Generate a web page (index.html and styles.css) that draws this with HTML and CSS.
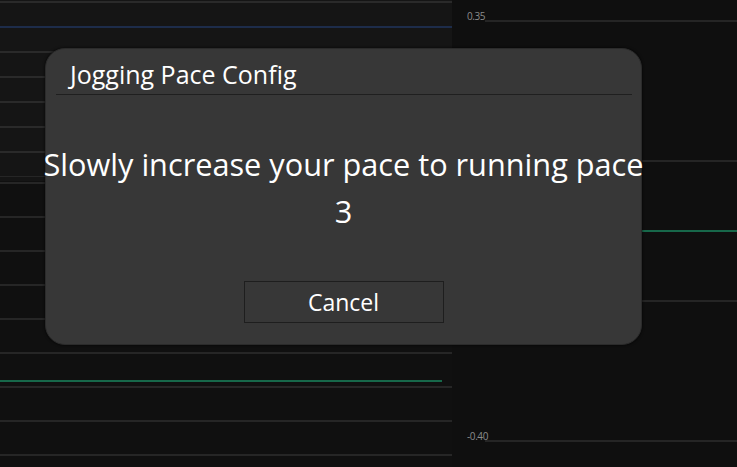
FILE: index.html
```html
<!DOCTYPE html>
<html>
<head>
<meta charset="utf-8">
<link rel="stylesheet" href="styles.css">
</head>
<body>
<div class="screen">
  <div class="left">
    <div class="upper">
      <div class="row"></div>
      <div class="row blue"></div>
      <div class="row"></div>
      <div class="row"></div>
      <div class="row"></div>
      <div class="row"></div>
      <div class="row"></div>
      <div class="row last"></div>
    </div>
    <div class="lower">
      <div class="lrow"></div>
      <div class="lrow"></div>
      <div class="lrow"></div>
      <div class="lrow"></div>
      <div class="lrow"></div>
      <div class="lrow"></div>
      <div class="lrow"></div>
      <div class="lrow"></div>
      <div class="lrow"></div>
      <div class="series" style="top: 199px"></div>
    </div>
  </div>
  <div class="right">
    <div class="axis">
      <div class="tick"><span class="lbl">0.35</span><span class="tline"></span></div>
      <div class="tick gap"><span class="lbl"></span><span class="tline"></span></div>
      <div class="tick gap half"><span class="lbl"></span><span class="tline green"></span></div>
      <div class="tick gap half"><span class="lbl"></span><span class="tline"></span></div>
      <div class="tick gap"><span class="lbl">-0.40</span><span class="tline"></span></div>
    </div>
  </div>

  <div class="dialog">
    <div class="title">Jogging Pace Config</div>
    <div class="sep"></div>
    <div class="message">Slowly increase your pace to running pace<br>3</div>
    <div class="actions"><button class="btn">Cancel</button></div>
  </div>
</div>
</body>
</html>
```
FILE: styles.css
```css
html, body {
  margin: 0;
  padding: 0;
  background: #0f0f0f;
  font-family: "Open Sans", "Noto Sans", sans-serif;
}
.screen {
  position: relative;
  width: 737px;
  height: 467px;
  display: flex;
  overflow: hidden;
}
.left {
  width: 452px;
  display: flex;
  flex-direction: column;
}
.upper {
  background: #151515;
  padding-top: 1px;
  height: 181px;
  box-sizing: border-box;
}
.row {
  height: 25px;
  border-top: 2px solid #2a2a2a;
  box-sizing: border-box;
}
.row.blue {
  border-top-color: #1d2c4a;
}
.row.last {
  border-top: 1px solid #262626;
  height: 5px;
}
.lower {
  position: relative;
  background: #101010;
  padding-top: 1px;
  flex: 1;
}
.lrow {
  height: 34px;
  border-top: 2px solid #262626;
  box-sizing: border-box;
}
.series {
  position: absolute;
  left: 0;
  width: 442px;
  height: 2px;
  background: #17684a;
}
.right {
  flex: 1;
  background: #0f0f0f;
  padding-top: 11px;
}
.axis {
  display: flex;
  flex-direction: column;
}
.tick {
  display: flex;
  align-items: flex-end;
  height: 10px;
}
.tick.gap { margin-top: 130px; }
.tick.gap.half { margin-top: 60px; }
.lbl {
  width: 33px;
  padding-left: 15px;
  box-sizing: border-box;
  font-size: 10px;
  line-height: 10px;
  color: #8c8c8c;
  white-space: nowrap;
  letter-spacing: -0.4px;
}
.tline {
  flex: 1;
  height: 2px;
  background: #252525;
  margin-bottom: -1px;
}
.tline.green {
  background: #17684a;
}
.dialog {
  position: absolute;
  left: 45px;
  top: 48px;
  width: 597px;
  height: 297px;
  box-sizing: border-box;
  background: #373737;
  border: 1px solid #2b2b2b;
  border-radius: 20px;
  box-shadow: 0 0 3px rgba(0,0,0,0.8);
  display: flex;
  flex-direction: column;
  color: #ffffff;
}
.title {
  font-size: 25px;
  line-height: 30px;
  padding: 10px 0 0 24px;
  height: 45px;
  box-sizing: border-box;
  white-space: nowrap;
}
.sep {
  margin: 0 9px 0 10px;
  height: 1px;
  background: #1f1f1f;
}
.message {
  margin: 46px -10px 0 -10px;
  text-align: center;
  font-size: 30.7px;
  line-height: 47px;
  white-space: nowrap;
}
.actions {
  display: flex;
  justify-content: center;
  margin-top: 46px;
}
.btn {
  width: 200px;
  height: 42px;
  background: #373737;
  border: 1px solid #1e1e1e;
  color: #ffffff;
  font-family: "Open Sans", "Noto Sans", sans-serif;
  font-size: 23px;
  padding: 0;
}
```
